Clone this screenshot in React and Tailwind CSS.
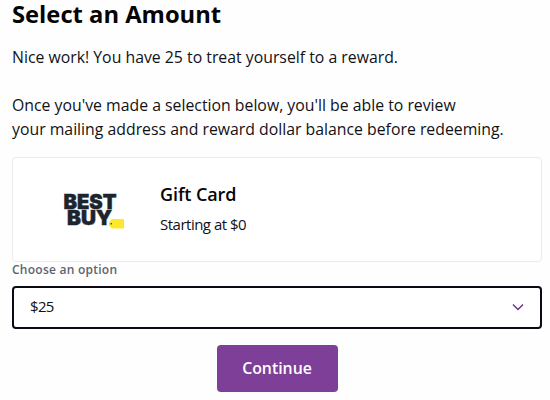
export default function App() {
  return (
    <main className="h-[400px] w-[550px] overflow-hidden bg-[#fefefe] pr-2 pl-3 font-['Open_Sans',sans-serif] text-[#111117]">
      <h1 className="text-[23.75px] leading-7 font-bold text-[#050508]">Select an Amount</h1>
      <p className="mt-[17px] text-[15.82px] leading-6">
        Nice work! You have 25 to treat yourself to a reward.
      </p>
      <p className="mt-6 text-[15.82px] leading-6">
        Once you've made a selection below, you'll be able to review
        <br />
        your mailing address and reward dollar balance before redeeming.
      </p>

      <section className="mt-4 flex h-[105px] items-center rounded-sm border border-[#ebebee] bg-white">
        <BestBuyLogo />
        <div className="-mt-1 ml-[35px]">
          <h2 className="text-[18px] leading-6 font-semibold tracking-[-0.1px] text-[#050508]">
            Gift Card
          </h2>
          <p className="mt-2 text-[15px] leading-5 tracking-[-0.5px]">Starting at $0</p>
        </div>
      </section>

      <label className="block text-[12px] leading-4 font-semibold tracking-[0.25px] text-[#5c6470]">
        Choose an option
      </label>
      <button className="mt-2 flex h-[43px] w-full items-center justify-between rounded-[4px] border-2 border-[#0c0814] bg-white pr-4 pb-0.5 pl-4 text-[15px] tracking-[-0.7px]">
        <span>$25</span>
        <svg width="12" height="8" viewBox="0 0 12 8" fill="none" stroke="#6b3585" strokeWidth="1.5">
          <path d="M1 1.5l5 5 5-5" />
        </svg>
      </button>

      <button className="mx-auto mt-4 block h-[47px] w-[121px] rounded-[4px] bg-[#7d3f98] text-[15.85px] font-semibold text-white">
        Continue
      </button>
    </main>
  );
}

function BestBuyLogo() {
  return (
    <svg className="ml-[50px]" width="62" height="48" viewBox="0 0 62 48">
      <g
        fill="#1d252c"
        stroke="#1d252c"
        strokeWidth="0.5"
        fontFamily="Inter, sans-serif"
        fontWeight="900"
        fontSize="20"
      >
        <text x="0.5" y="22.9" textLength="53" lengthAdjust="spacingAndGlyphs">
          BEST
        </text>
        <text x="4" y="38.9" textLength="45" lengthAdjust="spacingAndGlyphs">
          BUY
        </text>
      </g>
      <path
        d="M49 33h11a1 1 0 0 1 1 1v7.5a1 1 0 0 1-1 1H49l-3-3v-3.500z"
        fill="#fce92b"
      />
      <circle cx="48.3" cy="37.7" r="0.8" fill="#1d252c" />
    </svg>
  );
}
